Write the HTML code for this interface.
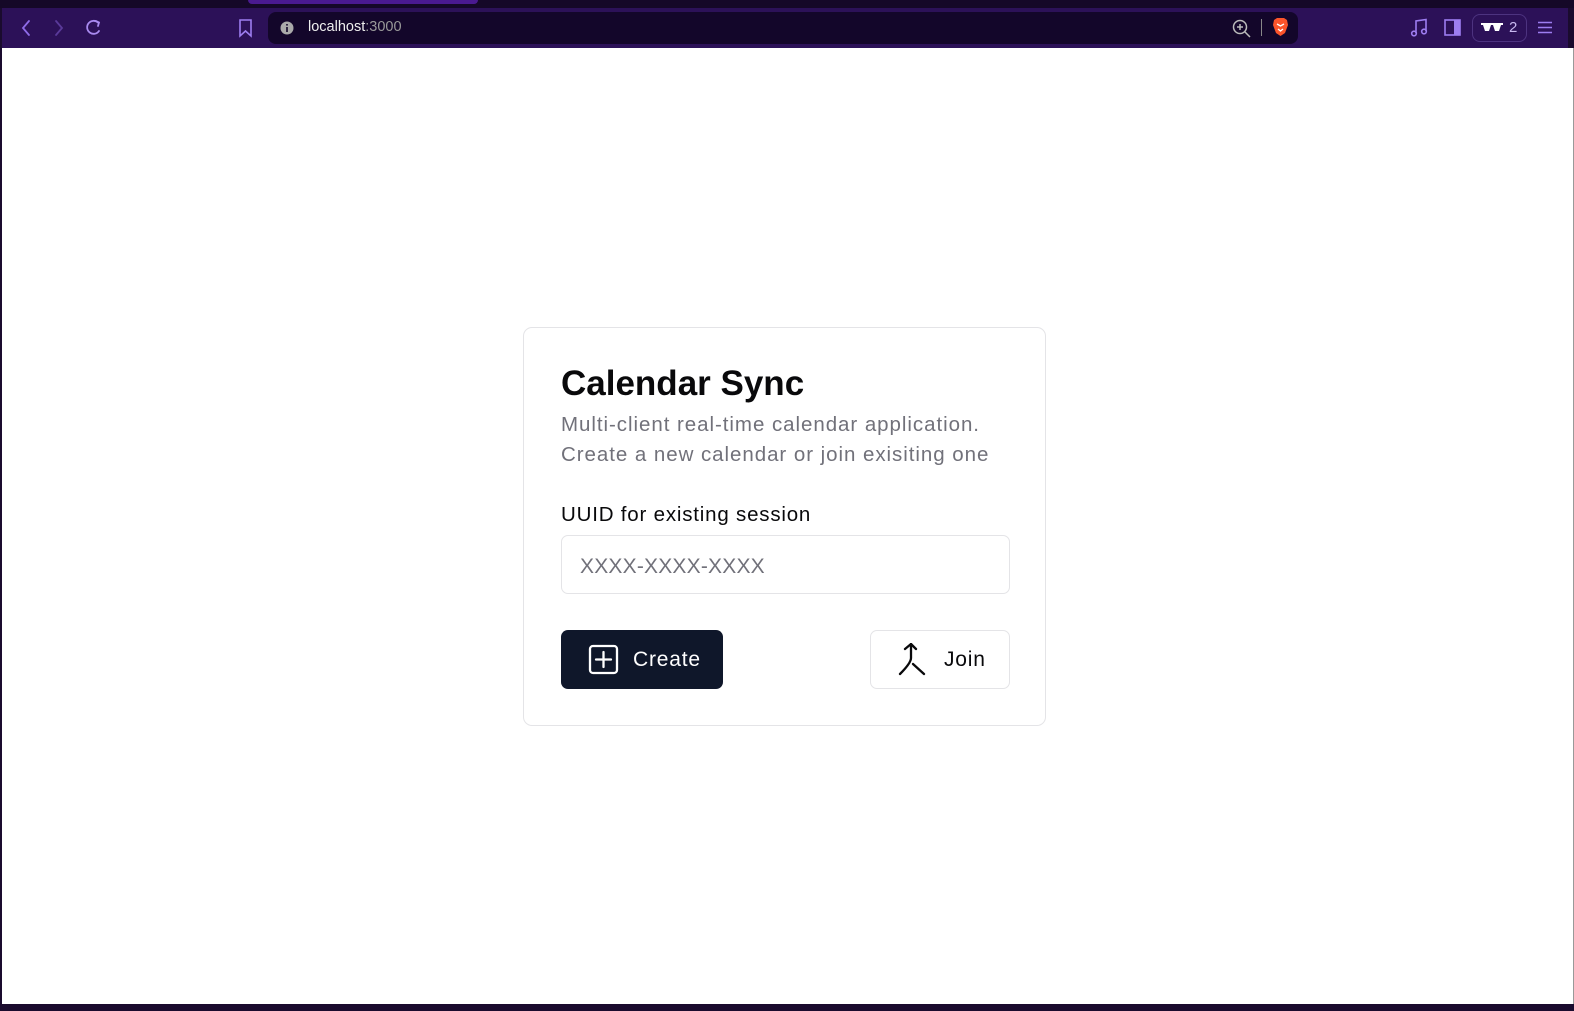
<!DOCTYPE html>
<html><head><meta charset="utf-8"><style>
*{box-sizing:border-box;margin:0;padding:0}
body{width:1574px;height:1011px;overflow:hidden;background:#1a0b2e;font-family:"Liberation Sans",sans-serif;position:relative}
.top{position:absolute;left:0;top:0;width:1574px;height:8px;background:#150828}
.tab{position:absolute;left:248px;top:0;width:230px;height:4px;background:#4a1a90;border-radius:0 0 6px 6px}
.bar{position:absolute;left:2px;top:8px;width:1566px;height:40px;background:#2c1158}
.url{position:absolute;left:268px;top:12px;width:1030px;height:32px;background:#13062a;border-radius:8px}
.page{position:absolute;left:2px;top:48px;width:1572px;height:956px;background:#fff;border-right:1px solid #999}
.ic{position:absolute}
.card{position:absolute;left:523px;top:327px;width:523px;height:399px;border:1px solid #e4e4e7;border-radius:9px;background:#fff}
h1{position:absolute;left:37px;top:36px;font-size:35px;font-weight:bold;color:#09090b;letter-spacing:0px}
.sub{position:absolute;left:37px;top:82px;font-size:20.5px;line-height:30px;color:#71717a;letter-spacing:0.95px}
.lab{position:absolute;left:37px;top:175px;font-size:20.5px;color:#09090b;letter-spacing:0.8px}
.inp{position:absolute;left:37px;top:207px;width:449px;height:59px;border:1px solid #e4e4e7;border-radius:7px;font-size:21px;color:#71717a;padding:19px 0 0 18px;letter-spacing:0.2px}
.btn{position:absolute;top:302px;height:59px;border-radius:7px;font-size:21px;display:flex;align-items:center;letter-spacing:0.8px}
.c{left:37px;width:162px;background:#0f172a;color:#fff;padding-left:27px}
.j{left:346px;width:140px;border:1px solid #e4e4e7;color:#09090b;padding-left:26px}
</style></head><body>
<div class="top"><div class="tab"></div></div>
<div class="bar"></div>
<svg class="ic" style="left:18px;top:18px" width="100" height="20" fill="none" stroke-width="1.8" stroke-linecap="round">
<path d="M11 3 L5 10 L11 17" stroke="#8f6be8"/>
<path d="M38 3 L44 10 L38 17" stroke="#5a3a9a"/>
<path d="M80 4.5 A6.5 6.5 0 1 0 81 13" stroke="#a98af0"/><path d="M78 3 L81 4.5 L80 8" stroke="#a98af0"/>
</svg>
<svg class="ic" style="left:238px;top:18px" width="16" height="20" fill="none" stroke="#9d7df0" stroke-width="1.6"><path d="M2 2 H13 V18 L7.5 13 L2 18 Z"/></svg>
<div class="url"></div>
<svg class="ic" style="left:280px;top:21px" width="14" height="14"><circle cx="7" cy="7" r="6.5" fill="#aaa"/><rect x="6.2" y="6" width="1.6" height="5" fill="#13062a"/><rect x="6.2" y="3" width="1.6" height="1.6" fill="#13062a"/></svg>
<div class="ic" style="left:308px;top:19px;font-size:14.5px;color:#eee">localhost<span style="color:#999">:3000</span></div>
<svg class="ic" style="left:1232px;top:19px" width="20" height="20" fill="none" stroke="#bbb" stroke-width="1.5"><circle cx="8" cy="8" r="6.5"/><path d="M13 13 L18 18 M5 8 H11 M8 5 V11"/></svg>
<div class="ic" style="left:1261px;top:19px;width:1px;height:17px;background:#888"></div>
<svg class="ic" style="left:1272px;top:17px" width="17" height="20"><path d="M2 3 L5 1 H12 L15 3 L16 8 L13 16 L8.5 19 L4 16 L1 8 Z" fill="#fb542b"/><path d="M5 7 L8.5 9 L12 7 M6 12 L8.5 14 L11 12" stroke="#fff" stroke-width="1.3" fill="none"/></svg>
<svg class="ic" style="left:1410px;top:18px" width="20" height="20" fill="none" stroke="#9d7df0" stroke-width="1.6"><path d="M6 15 V3 L16 1.5 V13"/><circle cx="4" cy="15.5" r="2.3"/><circle cx="14" cy="13.5" r="2.3"/></svg>
<svg class="ic" style="left:1444px;top:19px" width="18" height="18"><rect x="1" y="1" width="15" height="15" fill="none" stroke="#9d7df0" stroke-width="1.6"/><rect x="10" y="1" width="6" height="15" fill="#9d7df0"/></svg>
<div class="ic" style="left:1472px;top:14px;width:55px;height:28px;border:1px solid #4d3380;border-radius:8px"></div>
<svg class="ic" style="left:1481px;top:22px" width="22" height="10"><path d="M0 1 H22 V3 H20 L18 9 H14 L12 3 H10 L8 9 H4 L2 3 H0 Z" fill="#fff"/></svg>
<div class="ic" style="left:1509px;top:19px;font-size:15px;color:#c8b8f0">2</div>
<svg class="ic" style="left:1538px;top:21px" width="14" height="13" stroke="#9d7df0" stroke-width="1.5"><path d="M0 1.5 H14 M0 6.5 H14 M0 11.5 H14"/></svg>
<div class="page"></div>
<div class="card">
<h1>Calendar Sync</h1>
<div class="sub">Multi-client real-time calendar application.<br>Create a new calendar or join exisiting one</div>
<div class="lab">UUID for existing session</div>
<div class="inp">XXXX-XXXX-XXXX</div>
<div class="btn c"><svg width="31" height="31" fill="none" stroke="#fff" stroke-width="2.3" stroke-linecap="round"><rect x="2" y="2" width="27" height="27" rx="3"/><path d="M15.5 8 V23 M8 15.5 H23"/></svg><span style="margin-left:14px">Create</span></div>
<div class="btn j"><svg width="30" height="34" fill="none" stroke="#09090b" stroke-width="2.3" stroke-linecap="round" stroke-linejoin="round"><path d="M8 6 L14 1 L19 6"/><path d="M14 1 V15 Q14 20 3 31 M16 21 L27 31"/></svg><span style="margin-left:17px">Join</span></div>
</div>
</body></html>
